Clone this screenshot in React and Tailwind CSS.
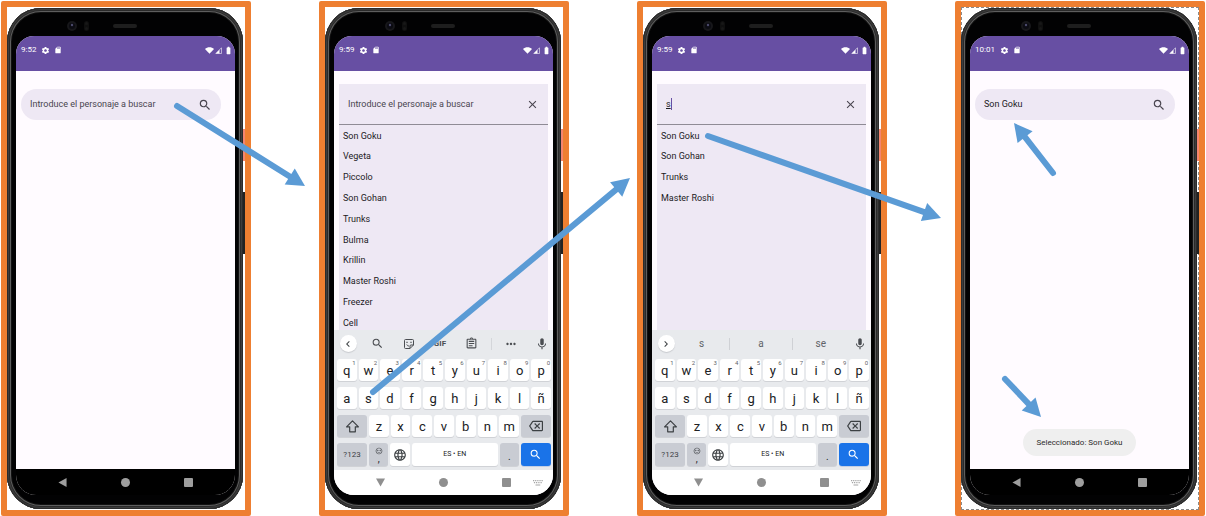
import React from "react";
import {
  MdSettings,
  MdSdCard,
  MdBatteryFull,
  MdSearch,
  MdClose,
  MdMic,
  MdOutlineAssignment,
  MdLanguage,
  MdOutlineBackspace,
  MdMoreHoriz,
  MdChevronLeft,
  MdChevronRight,
  MdSentimentSatisfiedAlt,
} from "react-icons/md";

const CHARACTERS = [
  "Son Goku",
  "Vegeta",
  "Piccolo",
  "Son Gohan",
  "Trunks",
  "Bulma",
  "Krillin",
  "Master Roshi",
  "Freezer",
  "Cell",
];

function WifiIcon() {
  return (
    <svg viewBox="0 0 18 13" className="h-[7px] w-[9px]" fill="#fff" aria-hidden="true">
      <path d="M0 3.4C2.4 1.3 5.5 0 9 0s6.600 1.300 9 3.400L9 13z" />
    </svg>
  );
}

function SignalIcon() {
  return (
    <svg viewBox="0 0 14 14" className="size-[7px]" aria-hidden="true">
      <path d="M13 1.500V13H1.500z" fill="none" stroke="#fff" strokeOpacity=".75" strokeWidth="1.500" />
      <path d="M9 5.500V13H1.500z" fill="#fff" />
    </svg>
  );
}

function StickerIcon() {
  return (
    <svg viewBox="0 0 24 24" className="size-[12px]" fill="none" stroke="#4a4d51" strokeWidth="2" aria-hidden="true">
      <path d="M21 14V5a2 2 0 0 0-2-2H5a2 2 0 0 0-2 2v14a2 2 0 0 0 2 2h9zM14 21v-5a2 2 0 0 1 2-2h5" />
      <path d="M7.500 13c.8 2 2.300 3 4.500 3" />
      <path d="M8 7.500v2.500M16 7.500v2.500" strokeWidth="2.400" />
    </svg>
  );
}

function ShiftIcon() {
  return (
    <svg viewBox="0 0 24 24" className="size-[15px]" fill="none" stroke="#3c4043" strokeWidth="1.900" strokeLinejoin="round" aria-hidden="true">
      <path d="M12 3 2.500 12.500H7.500V20.500h9v-8h5z" />
    </svg>
  );
}

function HideKeyboardIcon() {
  return (
    <svg viewBox="0 0 20 12" className="h-[6px] w-[10px]" fill="#a5a5a5" aria-hidden="true">
      <path d="M0 0h2.500v2.500H0zM4.200 0h2.500v2.500H4.200zM8.500 0H11v2.500H8.500zM12.800 0h2.500v2.500h-2.500zM17 0h2.500v2.500H17zM1.800 4.200h2.500v2.500H1.800zM6 4.200h2.500v2.500H6zM10.500 4.200H13v2.500h-2.500zM15 4.200h2.500v2.500H15zM5 9h9.500v2H5z" />
    </svg>
  );
}

function TopHardware() {
  return (
    <svg viewBox="0 0 236 28" className="h-7 w-full" aria-hidden="true">
      <circle cx="65" cy="18" r="5" fill="#17171a" />
      <circle cx="65" cy="18" r="3" fill="#0b0b12" />
      <circle cx="65" cy="17" r="1.200" fill="#4b4a6b" />
      <rect x="77" y="13" width="5" height="10" rx="2.500" fill="#0f0f0f" />
      <circle cx="79.500" cy="15.500" r="1.500" fill="#181818" />
      <circle cx="79.500" cy="20.500" r="1.500" fill="#181818" />
      <rect x="106" y="16" width="24" height="4" rx="2" fill="#1e1e1e" />
    </svg>
  );
}

function StatusBar({ time }) {
  return (
    <header className="h-[35px] bg-[#674fa3]">
      <div className="flex h-7 items-center pr-[2px] pl-[5px] text-white">
        <time className="text-[8px] leading-none">{time}</time>
        <MdSettings className="ml-[5px] size-[9px]" />
        <MdSdCard className="ml-[4px] size-[8px]" />
        <span className="ml-auto flex items-center">
          <WifiIcon />
          <span className="ml-px flex">
            <SignalIcon />
          </span>
          <MdBatteryFull className="ml-[2px] size-[9px]" />
        </span>
      </div>
    </header>
  );
}

function NavBar({ light }) {
  return (
    <nav
      className={
        light
          ? "grid h-[25px] grid-cols-[1fr_63px_63px_63px_1fr] place-items-center bg-white text-[#8f8f8f]"
          : "grid h-[26px] grid-cols-[1fr_63px_63px_63px_1fr] place-items-center bg-black text-[#9e9e9e]"
      }
    >
      <span />
      <button aria-label="Atrás">
        <svg viewBox="0 0 10 10" className={light ? "size-[9px] -rotate-90" : "size-[9px]"} fill="currentColor">
          <path d="M9.500 0v10L.5 5z" />
        </svg>
      </button>
      <button aria-label="Inicio" className="size-[9px] rounded-full bg-current" />
      <button aria-label="Recientes" className="size-[9px] rounded-[1px] bg-current" />
      {light ? (
        <button aria-label="Ocultar teclado" className="-ml-4">
          <HideKeyboardIcon />
        </button>
      ) : (
        <span />
      )}
    </nav>
  );
}

function Phone({ time, light, selected, children }) {
  return (
    <section className="flex rounded-[2px] border-[6px] border-[#ee7f31] bg-white">
      <div
        className={
          selected
            ? "flex flex-1 py-px pr-[2px] outline-1 -outline-offset-1 outline-dashed outline-[#8a8a8a]"
            : "flex flex-1 py-px pr-[2px]"
        }
      >
        <div className="relative flex flex-1 flex-col rounded-[34px] bg-[#020203] pr-[8px] pb-[14px] pl-[9px] shadow-[inset_0_0_0_1px_#2b2b2b,inset_0_0_0_2px_#3d3d3d,inset_0_0_0_3px_#2a2a2a,inset_0_0_0_4px_#5e5e5e,inset_0_0_0_5px_#111]">
          <span className="absolute top-[121px] -right-[2px] h-8 w-[2px] bg-[#f4856f]" />
          <span className="absolute top-[184px] -right-[2px] h-[62px] w-[2px] bg-[#222]" />
          <div className="-mr-[8px] -ml-[9px]">
            <TopHardware />
          </div>
          <div className="flex flex-1 flex-col overflow-hidden rounded-t-[18px] rounded-b-[20px] bg-[#fffbff]">
            <StatusBar time={time} />
            {children}
            <NavBar light={light} />
          </div>
        </div>
      </div>
    </section>
  );
}

function SearchPill({ value }) {
  return (
    <div className="mt-[18px] mr-[14px] ml-[5px] flex h-[31px] items-center rounded-full bg-[#eee8f4] pr-[9px] pl-[9px]">
      <input
        aria-label="Personaje"
        defaultValue={value}
        placeholder="Introduce el personaje a buscar"
        className="min-w-0 flex-1 pt-px text-[9px] text-[#1c1b1f] outline-none placeholder:text-[#49454f]"
      />
      <button aria-label="Buscar" className="text-[#49454f]">
        <MdSearch className="size-[14px]" />
      </button>
    </div>
  );
}

function SearchView({ value, items }) {
  return (
    <div className="mx-[5px] mt-[13px] flex flex-1 flex-col overflow-hidden bg-[#eee8f4]">
      <div className="flex h-[41px] shrink-0 items-center border-b border-[#8f8b95] pr-[9px] pl-[9px]">
        <div className="relative flex min-w-0 flex-1 items-center">
          <input
            aria-label="Personaje"
            defaultValue={value}
            placeholder="Introduce el personaje a buscar"
            className={
              value
                ? "w-full pt-px text-[9px] text-[#1c1b1f] underline underline-offset-1 outline-none"
                : "w-full pt-px text-[9px] outline-none placeholder:text-[#49454f]"
            }
          />
          {value ? <span className="absolute left-[5px] h-3 w-px bg-[#6750a4]" /> : null}
        </div>
        <button aria-label="Borrar" className="text-[#49454f]">
          <MdClose className="size-[13px]" />
        </button>
      </div>
      <div className="h-0 grow overflow-hidden pl-[4px] text-[9px] text-[#1c1b1f]">
        <ul className="grid h-[209px] grid-rows-10 pt-px">
          {items.map((name) => (
            <li key={name} className="flex items-center">
              {name}
            </li>
          ))}
        </ul>
      </div>
    </div>
  );
}

function RoundButton({ label, children }) {
  return (
    <button
      aria-label={label}
      className="flex size-[17px] items-center justify-center rounded-full bg-white text-[#3c4043] shadow-[0_1px_1px_#c8cace]"
    >
      {children}
    </button>
  );
}

function Toolbar() {
  return (
    <div className="grid h-[27px] grid-cols-[28px_31fr_31fr_31fr_31fr_44fr_22px] place-items-center text-[#4a4d51]">
      <RoundButton label="Cerrar herramientas">
        <MdChevronLeft className="size-[12px]" />
      </RoundButton>
      <button aria-label="Buscar">
        <MdSearch className="size-[13px]" />
      </button>
      <button aria-label="Stickers">
        <StickerIcon />
      </button>
      <button className="text-[8px] font-bold">GIF</button>
      <button aria-label="Portapapeles">
        <MdOutlineAssignment className="size-[13px]" />
      </button>
      <span className="ml-1 flex h-3 items-center justify-center justify-self-stretch border-l border-[#d4d6da]">
        <button aria-label="Más">
          <MdMoreHoriz className="size-[14px]" />
        </button>
      </span>
      <button aria-label="Voz">
        <MdMic className="size-[14px]" />
      </button>
    </div>
  );
}

function Suggestions() {
  return (
    <div className="grid h-[27px] grid-cols-[28px_49fr_63fr_56fr_22px] place-items-center text-[10px] leading-3 text-[#5f6368]">
      <RoundButton label="Abrir herramientas">
        <MdChevronRight className="size-[12px]" />
      </RoundButton>
      <button className="pr-[6px]">s</button>
      <button className="justify-self-stretch border-x border-[#cfd1d5]">a</button>
      <button>se</button>
      <button aria-label="Voz" className="text-[#4a4d51]">
        <MdMic className="size-[14px]" />
      </button>
    </div>
  );
}

const keyBase =
  "relative flex items-center justify-center rounded-[3px] text-[13px] leading-none text-[#202124] shadow-[0_1px_0_#d0d2d6]";

function Key({ children, hint }) {
  return (
    <button className={`${keyBase} bg-white`}>
      {children}
      {hint ? <span className="absolute top-px right-px text-[6px] text-[#5f6368]">{hint}</span> : null}
    </button>
  );
}

function GrayKey({ children, label }) {
  return (
    <button aria-label={label} className={`${keyBase} bg-[#c9ccd3]`}>
      {children}
    </button>
  );
}

function Keyboard({ suggestions }) {
  return (
    <div className="flex h-[140px] flex-col bg-[#e8eaed]">
      {suggestions ? <Suggestions /> : <Toolbar />}
      <div className="flex flex-col gap-[6px] pt-[2px] pr-[2px] pl-[3px]">
        <div className="grid h-[22px] grid-cols-10 gap-[2px]">
          {"qwertyuiop".split("").map((letter, i) => (
            <Key key={letter} hint={String((i + 1) % 10)}>
              {letter}
            </Key>
          ))}
        </div>
        <div className="grid h-[22px] grid-cols-10 gap-[2px]">
          {"asdfghjklñ".split("").map((letter) => (
            <Key key={letter}>{letter}</Key>
          ))}
        </div>
        <div className="grid h-[22px] grid-cols-[30px_repeat(7,1fr)_30px] gap-[2px]">
          <GrayKey label="Mayúsculas">
            <ShiftIcon />
          </GrayKey>
          {"zxcvbnm".split("").map((letter) => (
            <Key key={letter}>{letter}</Key>
          ))}
          <GrayKey label="Retroceso">
            <MdOutlineBackspace className="size-[14px] text-[#3c4043]" />
          </GrayKey>
        </div>
        <div className="grid h-[23px] grid-cols-[30px_19fr_19fr_84fr_19fr_30px] gap-[2px]">
          <GrayKey>
            <span className="text-[8px] text-[#3c4043]">?123</span>
          </GrayKey>
          <GrayKey>
            <span className="flex flex-col items-center">
              <MdSentimentSatisfiedAlt className="size-[8px] text-[#4a4d51]" />
              <span className="text-[10px] leading-[8px]">,</span>
            </span>
          </GrayKey>
          <Key>
            <MdLanguage className="size-[14px] text-[#3c4043]" />
          </Key>
          <Key>
            <span className="text-[7px]">ES • EN</span>
          </Key>
          <GrayKey>
            <span className="pt-1 text-[10px]">.</span>
          </GrayKey>
          <button
            aria-label="Buscar"
            className="flex items-center justify-center rounded-[3px] bg-[#1a73e8] text-white shadow-[0_1px_0_#c3cfe4]"
          >
            <MdSearch className="size-[13px]" />
          </button>
        </div>
      </div>
    </div>
  );
}

function Arrow({ from, to }) {
  const length = Math.hypot(to[0] - from[0], to[1] - from[1]);
  const ux = (to[0] - from[0]) / length;
  const uy = (to[1] - from[1]) / length;
  const bx = to[0] - ux * 18;
  const by = to[1] - uy * 18;
  const head = [
    to,
    [bx - uy * 9.5, by + ux * 9.5],
    [bx + uy * 9.5, by - ux * 9.5],
  ];
  return (
    <g>
      <line x1={from[0]} y1={from[1]} x2={bx + ux} y2={by + uy} stroke="#5b9bd5" strokeWidth="6" strokeLinecap="round" />
      <polygon points={head.map((p) => p.join(",")).join(" ")} fill="#5b9bd5" />
    </g>
  );
}

export default function App() {
  return (
    <main className="relative flex min-h-screen bg-white px-px pt-px font-[Roboto,sans-serif]">
      <div className="grid flex-1 grid-cols-4 gap-[68px]">
        <Phone time="9:52">
          <div className="flex-1">
            <SearchPill />
          </div>
        </Phone>
        <Phone time="9:59" light>
          <SearchView items={CHARACTERS} />
          <Keyboard />
        </Phone>
        <Phone time="9:59" light>
          <SearchView value="s" items={["Son Goku", "Son Gohan", "Trunks", "Master Roshi"]} />
          <Keyboard suggestions />
        </Phone>
        <Phone time="10:01" selected>
          <div className="flex flex-1 flex-col">
            <SearchPill value="Son Goku" />
            <p
              role="status"
              className="mt-auto mb-[13px] flex h-[27px] items-center self-center rounded-full bg-[#efefef] px-[13px] text-[8px] text-[#2b2b2b]"
            >
              Seleccionado: Son Goku
            </p>
          </div>
        </Phone>
      </div>
      <svg viewBox="0 0 1206 516" className="pointer-events-none absolute inset-0 h-full w-full" aria-hidden="true">
        <Arrow from={[177, 106]} to={[305, 186]} />
        <Arrow from={[373, 392]} to={[630, 178]} />
        <Arrow from={[708, 136]} to={[941, 218]} />
        <Arrow from={[1053, 173]} to={[1014, 123]} />
        <Arrow from={[1005, 379]} to={[1041, 417]} />
      </svg>
    </main>
  );
}
